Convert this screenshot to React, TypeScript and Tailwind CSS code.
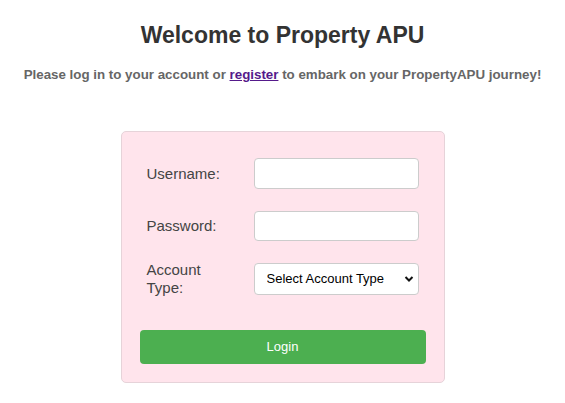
import { useState } from "react";

export default function App() {
  const [username, setUsername] = useState("");
  const [password, setPassword] = useState("");
  const [accountType, setAccountType] = useState("");

  return (
    <div className="min-h-screen bg-white px-5 pt-[21px] font-['Liberation_Sans',Arial,sans-serif]">
      <h1 className="text-center text-[23px] leading-[28px] font-bold text-[#333]">Welcome to Property APU</h1>
      <p className="mt-[18px] text-center text-[13.33px] leading-[16px] font-bold text-[#666]">
        Please log in to your account or{" "}
        <a href="#" className="text-[#551a8b] underline">register</a> to embark on your PropertyAPU journey!
      </p>

      {/* login card */}
      <form
        className="mx-auto mt-[48px] w-[324px] rounded-[5px] border border-[#e6d3d9] bg-[#ffe4ec] px-[18px] pt-[26px] pb-[18px]"
        onSubmit={(e) => e.preventDefault()}
      >
        <div className="flex flex-col gap-[22px] px-[7px]">
          <div className="flex h-[31px] items-center">
            <label className="w-[100px] text-[15px] leading-[18px] text-[#444]">Username:</label>
            <input
              type="text"
              value={username}
              onChange={(e) => setUsername(e.target.value)}
              className="ml-auto h-[31px] w-[165px] rounded-[4px] border border-[#ccc] bg-white px-2 text-[13px] outline-none"
            />
          </div>
          <div className="flex h-[30px] items-center">
            <label className="w-[100px] text-[15px] leading-[18px] text-[#444]">Password:</label>
            <input
              type="password"
              value={password}
              onChange={(e) => setPassword(e.target.value)}
              className="ml-auto h-[30px] w-[165px] rounded-[4px] border border-[#ccc] bg-white px-2 text-[13px] outline-none"
            />
          </div>
          <div className="flex h-[32px] items-center">
            <label className="w-[80px] text-[15px] leading-[18px] text-[#444]">Account Type:</label>
            <div className="relative ml-auto h-[32px] w-[165px]">
              <select
                value={accountType}
                onChange={(e) => setAccountType(e.target.value)}
                className="h-full w-full appearance-none rounded-[4px] border border-[#ccc] bg-white pl-[12px] text-[13px] text-black outline-none"
              >
                <option value="">Select Account Type</option>
                <option value="tenant">Tenant</option>
                <option value="owner">Owner</option>
                <option value="agent">Agent</option>
              </select>
              <svg
                className="pointer-events-none absolute right-[5px] top-1/2 -translate-y-1/2"
                width="10"
                height="7"
                viewBox="0 0 10 7"
                fill="none"
              >
                <path d="M1.5 1.5 L5 5 L8.5 1.5" stroke="#111" strokeWidth="2" />
              </svg>
            </div>
          </div>
        </div>

        <button
          type="submit"
          className="mt-[35px] h-[34px] w-full rounded-[4px] bg-[#4caf50] text-[13px] text-white"
        >
          Login
        </button>
      </form>
    </div>
  );
}
